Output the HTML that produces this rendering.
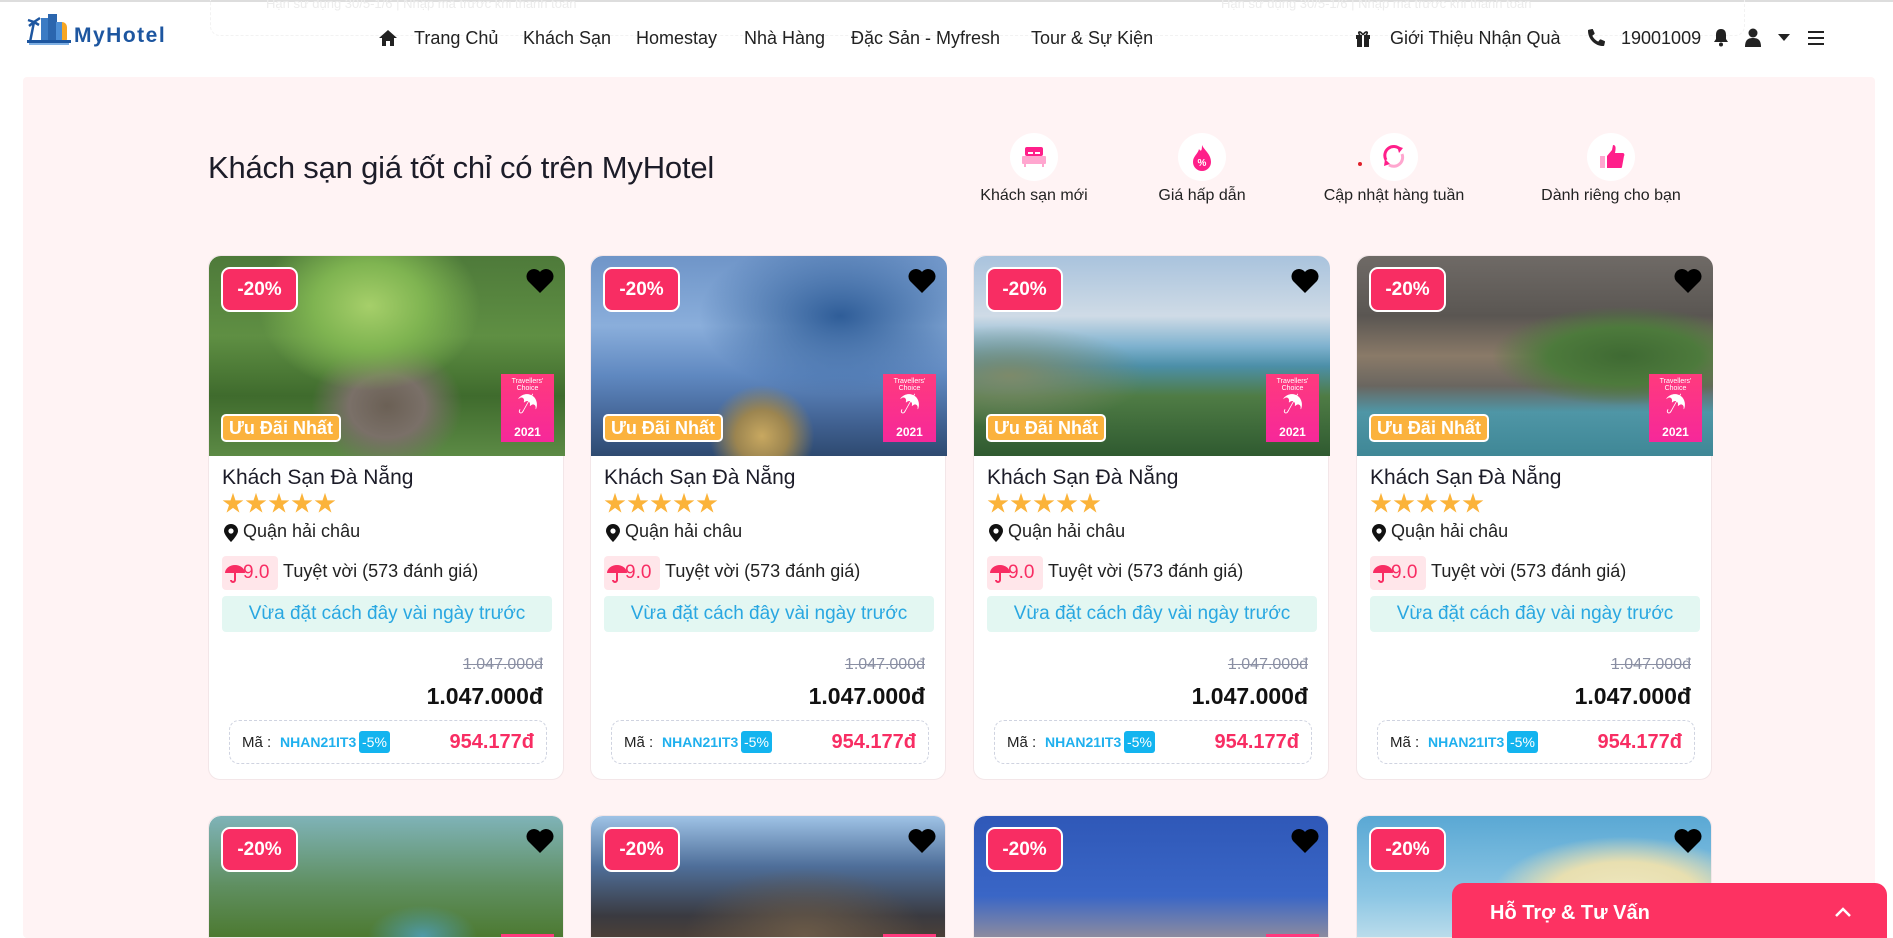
<!DOCTYPE html>
<html style="height:938px;overflow:hidden"><head><meta charset="utf-8">
<style>
*{box-sizing:border-box;margin:0;padding:0}
html,body{width:1893px;height:938px;overflow:hidden}
body{background:#fff;font-family:"Liberation Sans","Noto Sans CJK SC",sans-serif;color:#1c1c28;position:relative}
.topline{position:absolute;left:0;top:0;width:1893px;height:2px;background:#ddd}
.ghost{position:absolute;left:210px;top:0;width:1535px;height:36px;border:1px dashed #f2f2f2;border-top:none;border-radius:0 0 10px 10px;color:#ececec;font-size:13px;padding-left:55px;line-height:8px}
.ghost span{position:absolute;left:1010px}
.logo{position:absolute;left:27px;top:12px}
.logotxt{position:absolute;left:74px;top:24px;font-size:21px;font-weight:bold;color:#1d56a0;letter-spacing:1.5px}
.nav{position:absolute;top:28px;font-size:18px;color:#222;white-space:nowrap}
.pink{position:absolute;left:23px;top:77px;width:1852px;height:861px;background:#fff3f4;border-radius:4px}
h1{position:absolute;left:208px;top:150px;font-size:31px;font-weight:normal;color:#1c1c28;letter-spacing:-.2px}
.fi{position:absolute;top:133px;width:48px;height:48px;border-radius:50%;background:#fff}
.fl{position:absolute;top:187px;font-size:16px;color:#222;text-align:center;width:200px}
.card{position:absolute;width:356px;height:525px;background:#fff;border-radius:12px;border:1px solid #f3e6e8}
.r2{height:123px;overflow:hidden;border-radius:12px 12px 0 0}
.img{position:absolute;left:0;top:0;width:356px;height:200px;border-radius:12px 12px 0 0;overflow:hidden}
.disc{position:absolute;left:12px;top:11px;width:77px;height:45px;background:#f82d63;border:2px solid #fff;border-radius:9px;color:#fff;font-weight:bold;font-size:19px;text-align:center;line-height:41px}
.heart{position:absolute;left:316px;top:12px}
.tc{position:absolute;left:292px;top:118px;width:53px;height:68px;background:linear-gradient(#ff3a7d,#f6289a);color:#fff;text-align:center}
.tc .t{font-size:7px;margin-top:4px}
.tc .y{font-size:12px;font-weight:bold;position:absolute;bottom:3px;width:100%}
.uu{position:absolute;left:12px;top:158px;padding:0 6px;height:28px;background:#fbb23d;border:2px solid #fff;border-radius:5px;color:#fff;font-weight:bold;font-size:18px;line-height:24px}
.ttl{position:absolute;left:13px;top:210px;font-size:21px;color:#1c1c28}
.stars{position:absolute;left:13px;top:237px;color:#fbb33a;font-size:22px;letter-spacing:1px;line-height:22px}
.loc{position:absolute;left:34px;top:265px;font-size:18px;color:#222}
.rb{position:absolute;left:13px;top:300px;width:56px;height:34px;background:#ffe6ea;border-radius:4px;color:#f82d63;font-size:19px;line-height:34px;padding-left:21px}
.rt{position:absolute;left:74px;top:305px;font-size:18px;color:#222}
.green{position:absolute;left:13px;top:340px;width:330px;height:36px;background:#e3f7f2;border-radius:4px;color:#29a7e1;font-size:19px;text-align:center;line-height:36px}
.old{position:absolute;right:20px;top:400px;font-size:16px;color:#8a8fa3;text-decoration:line-through}
.price{position:absolute;right:20px;top:427px;font-size:23px;font-weight:bold;color:#111}
.cp{position:absolute;left:20px;top:464px;width:318px;height:44px;border:1px dashed #cfd3e0;border-radius:10px}
.cp .m{position:absolute;left:12px;top:13px;font-size:15px;color:#222}
.cp .c{position:absolute;left:50px;top:13px;font-size:14px;color:#1fb0ee;font-weight:bold}
.cp .p{position:absolute;left:129px;top:10px;background:#13b4ef;color:#fff;font-size:14px;padding:3px 3px;border-radius:3px}
.cp .r{position:absolute;right:12px;top:10px;font-size:20px;color:#f82d63;font-weight:bold}
.help{position:absolute;left:1452px;top:883px;width:435px;height:55px;background:#fd3262;border-radius:12px 12px 0 0;color:#fff;font-weight:bold;font-size:20px}
</style></head><body>
<div class="topline"></div>
<div class="ghost">Hạn sử dụng 30/5-1/6 | Nhập mã trước khi thanh toán<span>Hạn sử dụng 30/5-1/6 | Nhập mã trước khi thanh toán</span></div>
<svg class="logo" width="46" height="34" viewBox="0 0 46 34"><rect x="30" y="10" width="10" height="22" rx="5" fill="#f6a623"/><rect x="14" y="6" width="8" height="24" fill="#3b7bc4"/><rect x="21" y="2" width="9" height="28" fill="#2b66ae"/><rect x="29" y="10" width="6" height="20" fill="#4d8fd6"/><path d="M3 30 L7 10 M7 10 L1 8 M7 10 L13 6 M7 10 L2 14 M7 10 L12 13" stroke="#1d56a0" stroke-width="2.5" fill="none"/><rect x="0" y="28" width="44" height="3" fill="#1d56a0"/><rect x="2" y="31" width="40" height="2" fill="#7fb0e4"/></svg>
<div class="logotxt">MyHotel</div>
<svg style="position:absolute;left:378px;top:29px" width="20" height="18" viewBox="0 0 20 18"><path d="M10 1 L19 9 L16 9 L16 17 L12 17 L12 12 L8 12 L8 17 L4 17 L4 9 L1 9 Z" fill="#222"/></svg>
<div class="nav" style="left:414px">Trang Chủ</div>
<div class="nav" style="left:523px">Khách Sạn</div>
<div class="nav" style="left:636px">Homestay</div>
<div class="nav" style="left:744px">Nhà Hàng</div>
<div class="nav" style="left:851px">Đặc Sản - Myfresh</div>
<div class="nav" style="left:1031px">Tour &amp; Sự Kiện</div>
<svg style="position:absolute;left:1355px;top:30px" width="16" height="17" viewBox="0 0 16 17"><rect x="1" y="5" width="14" height="4" fill="#222"/><rect x="2" y="9" width="12" height="8" fill="#222"/><rect x="7" y="5" width="2" height="12" fill="#fff"/><path d="M8 5 C5 0 2 2 5 5 M8 5 C11 0 14 2 11 5" stroke="#222" stroke-width="1.6" fill="none"/></svg>
<div class="nav" style="left:1390px">Giới Thiệu Nhận Quà</div>
<svg style="position:absolute;left:1588px;top:29px" width="17" height="17" viewBox="0 0 512 512"><path fill="#222" d="M497 361l-112-48a24 24 0 0 0-28 7l-50 61A371 371 0 0 1 130 204l61-50a24 24 0 0 0 7-28L150 14a24 24 0 0 0-27-14L19 24A24 24 0 0 0 0 48c0 257 208 464 464 464a24 24 0 0 0 24-19l24-104a24 24 0 0 0-15-28z"/></svg>
<div class="nav" style="left:1621px">19001009</div>
<svg style="position:absolute;left:1713px;top:28px" width="16" height="19" viewBox="0 0 16 19"><path d="M8 1 C4 1 3 4 3 7 L3 11 L1 14 L15 14 L13 11 L13 7 C13 4 12 1 8 1 Z" fill="#222"/><circle cx="8" cy="16.5" r="2" fill="#222"/></svg>
<svg style="position:absolute;left:1744px;top:28px" width="18" height="19" viewBox="0 0 18 19"><circle cx="9" cy="5" r="4.5" fill="#222"/><path d="M1 19 C1 12 4 10 9 10 C14 10 17 12 17 19 Z" fill="#222"/></svg>
<svg style="position:absolute;left:1778px;top:34px" width="12" height="8"><path d="M0 0 L12 0 L6 7 Z" fill="#222"/></svg>
<svg style="position:absolute;left:1808px;top:30px" width="16" height="15"><rect y="1" width="16" height="2" fill="#222"/><rect y="7" width="16" height="2" fill="#222"/><rect y="13" width="16" height="2" fill="#222"/></svg>

<div class="pink"></div>
<h1>Khách sạn giá tốt chỉ có trên MyHotel</h1>
<div class="fi" style="left:1010px"><svg style="margin:13px 0 0 11px" width="26" height="22" viewBox="0 0 26 22"><rect x="4" y="1" width="18" height="9" rx="2" fill="#ff1f8a"/><rect x="7" y="6" width="5" height="2" fill="#fff"/><rect x="14" y="6" width="5" height="2" fill="#fff"/><rect x="1" y="10" width="24" height="8" rx="1" fill="#ffa6cf"/><rect x="3" y="18" width="2" height="3" fill="#ffa6cf"/><rect x="21" y="18" width="2" height="3" fill="#ffa6cf"/></svg></div>
<div class="fi" style="left:1178px"><svg style="margin:11px 0 0 13px" width="22" height="28" viewBox="0 0 22 28"><path d="M11 1 C13 6 20 10 20 18 A9 9 0 0 1 2 18 C2 12 7 10 8 5 C10 8 11 7 11 1 Z" fill="#ff1f8a"/><text x="11" y="22" font-size="10" fill="#fff" text-anchor="middle" font-family="Liberation Sans" font-weight="bold">%</text></svg></div>
<div style="position:absolute;left:1358px;top:162px;width:4px;height:4px;border-radius:50%;background:#e0202a"></div>
<div class="fi" style="left:1370px"><svg style="margin:11px 0 0 11px" width="26" height="26" viewBox="0 0 26 26"><path d="M5 16 A9 9 0 0 1 19 5" stroke="#ff1f8a" stroke-width="3" fill="none"/><path d="M16 2 L22 4 L18 9 Z" fill="#ff1f8a"/><path d="M21 10 A9 9 0 0 1 8 21" stroke="#ffa6cf" stroke-width="3" fill="none"/><path d="M4 15 L3 22 L9 20 Z" fill="#ff1f8a"/></svg></div>
<div class="fi" style="left:1587px"><svg style="margin:12px 0 0 12px" width="26" height="24" viewBox="0 0 26 24"><rect x="1" y="11" width="5" height="12" fill="#ffa6cf"/><path d="M8 11 L13 5 L14 0 C17 0 17 3 16 8 L24 8 C25 8 26 10 25 11 L23 22 C23 23 22 23 21 23 L8 23 Z" fill="#ff1f8a"/></svg></div>
<div class="fl" style="left:934px">Khách sạn mới</div>
<div class="fl" style="left:1102px">Giá hấp dẫn</div>
<div class="fl" style="left:1294px">Cập nhật hàng tuần</div>
<div class="fl" style="left:1511px">Dành riêng cho bạn</div>

<!-- row 1 -->
<div class="card" style="left:208px;top:255px">
<div class="img" style="background:radial-gradient(ellipse at 45% 25%,#a6cf6a 0,#7fb451 20%,transparent 40%),radial-gradient(ellipse at 50% 75%,#6b6055 0,#7a7068 15%,transparent 30%),linear-gradient(180deg,#4e7a3a 0%,#5f8f43 40%,#3f6b2d 70%,#5c8a45 100%)"></div>
<div class="disc">-20%</div>
<svg class="heart" width="30" height="26" viewBox="0 0 30 26"><path d="M15 25 L3 13 A7 7 0 0 1 15 4 A7 7 0 0 1 27 13 Z" fill="#000"/></svg>
<div class="tc"><div class="t">Travellers' Choice</div><div style="font-size:22px;line-height:26px">☂</div><div class="y">2021</div></div>
<div class="uu">Ưu Đãi Nhất</div>
<div class="ttl">Khách Sạn Đà Nẵng</div><div class="stars">★★★★★</div>
<svg style="position:absolute;left:15px;top:268px" width="14" height="18" viewBox="0 0 14 18"><path d="M7 0 A7 7 0 0 1 14 7 C14 11 7 18 7 18 C7 18 0 11 0 7 A7 7 0 0 1 7 0 Z" fill="#111"/><circle cx="7" cy="7" r="2.6" fill="#fff"/></svg>
<div class="loc">Quận hải châu</div>
<div class="rb">9.0</div><svg style="position:absolute;left:15px;top:307px" width="22" height="20" viewBox="0 0 22 20"><path d="M1 10 A10 8 0 0 1 21 10 Z" fill="#f82d63"/><path d="M11 9 L11 17 A2 2 0 0 1 7 17" stroke="#f82d63" stroke-width="2" fill="none"/></svg>
<div class="rt">Tuyệt vời (573 đánh giá)</div>
<div class="green">Vừa đặt cách đây vài ngày trước</div>
<div class="old">1.047.000đ</div><div class="price">1.047.000đ</div>
<div class="cp"><span class="m">Mã :</span><span class="c">NHAN21IT3</span><span class="p">-5%</span><span class="r">954.177đ</span></div>
</div>

<div class="card" style="left:590px;top:255px">
<div class="img" style="background:radial-gradient(ellipse at 48% 90%,#c8a860 0,#9c8550 10%,transparent 20%),radial-gradient(ellipse at 70% 30%,#2f5d98 0,transparent 40%),linear-gradient(180deg,#6f95c8 0%,#8aaedb 35%,#5f88c0 60%,#3f5f8f 85%,#2e4a70 100%)"></div>
<div class="disc">-20%</div>
<svg class="heart" width="30" height="26" viewBox="0 0 30 26"><path d="M15 25 L3 13 A7 7 0 0 1 15 4 A7 7 0 0 1 27 13 Z" fill="#000"/></svg>
<div class="tc"><div class="t">Travellers' Choice</div><div style="font-size:22px;line-height:26px">☂</div><div class="y">2021</div></div>
<div class="uu">Ưu Đãi Nhất</div>
<div class="ttl">Khách Sạn Đà Nẵng</div><div class="stars">★★★★★</div>
<svg style="position:absolute;left:15px;top:268px" width="14" height="18" viewBox="0 0 14 18"><path d="M7 0 A7 7 0 0 1 14 7 C14 11 7 18 7 18 C7 18 0 11 0 7 A7 7 0 0 1 7 0 Z" fill="#111"/><circle cx="7" cy="7" r="2.6" fill="#fff"/></svg>
<div class="loc">Quận hải châu</div>
<div class="rb">9.0</div><svg style="position:absolute;left:15px;top:307px" width="22" height="20" viewBox="0 0 22 20"><path d="M1 10 A10 8 0 0 1 21 10 Z" fill="#f82d63"/><path d="M11 9 L11 17 A2 2 0 0 1 7 17" stroke="#f82d63" stroke-width="2" fill="none"/></svg>
<div class="rt">Tuyệt vời (573 đánh giá)</div>
<div class="green">Vừa đặt cách đây vài ngày trước</div>
<div class="old">1.047.000đ</div><div class="price">1.047.000đ</div>
<div class="cp"><span class="m">Mã :</span><span class="c">NHAN21IT3</span><span class="p">-5%</span><span class="r">954.177đ</span></div>
</div>

<div class="card" style="left:973px;top:255px">
<div class="img" style="background:radial-gradient(ellipse at 10% 60%,#7d8a6a 0,transparent 30%),linear-gradient(180deg,#a9c3dd 0%,#cfdbe6 30%,#7fb2cf 45%,#4c8fa8 55%,#4f7c45 70%,#2f5a30 100%)"></div>
<div class="disc">-20%</div>
<svg class="heart" width="30" height="26" viewBox="0 0 30 26"><path d="M15 25 L3 13 A7 7 0 0 1 15 4 A7 7 0 0 1 27 13 Z" fill="#000"/></svg>
<div class="tc"><div class="t">Travellers' Choice</div><div style="font-size:22px;line-height:26px">☂</div><div class="y">2021</div></div>
<div class="uu">Ưu Đãi Nhất</div>
<div class="ttl">Khách Sạn Đà Nẵng</div><div class="stars">★★★★★</div>
<svg style="position:absolute;left:15px;top:268px" width="14" height="18" viewBox="0 0 14 18"><path d="M7 0 A7 7 0 0 1 14 7 C14 11 7 18 7 18 C7 18 0 11 0 7 A7 7 0 0 1 7 0 Z" fill="#111"/><circle cx="7" cy="7" r="2.6" fill="#fff"/></svg>
<div class="loc">Quận hải châu</div>
<div class="rb">9.0</div><svg style="position:absolute;left:15px;top:307px" width="22" height="20" viewBox="0 0 22 20"><path d="M1 10 A10 8 0 0 1 21 10 Z" fill="#f82d63"/><path d="M11 9 L11 17 A2 2 0 0 1 7 17" stroke="#f82d63" stroke-width="2" fill="none"/></svg>
<div class="rt">Tuyệt vời (573 đánh giá)</div>
<div class="green">Vừa đặt cách đây vài ngày trước</div>
<div class="old">1.047.000đ</div><div class="price">1.047.000đ</div>
<div class="cp"><span class="m">Mã :</span><span class="c">NHAN21IT3</span><span class="p">-5%</span><span class="r">954.177đ</span></div>
</div>

<div class="card" style="left:1356px;top:255px">
<div class="img" style="background:radial-gradient(ellipse at 75% 50%,#3f6a33 0,#4d7a3c 20%,transparent 35%),linear-gradient(180deg,#6f6a66 0%,#5a5652 30%,#8a7a68 50%,#6a6660 65%,#4f96a6 78%,#3f8796 100%)"></div>
<div class="disc">-20%</div>
<svg class="heart" width="30" height="26" viewBox="0 0 30 26"><path d="M15 25 L3 13 A7 7 0 0 1 15 4 A7 7 0 0 1 27 13 Z" fill="#000"/></svg>
<div class="tc"><div class="t">Travellers' Choice</div><div style="font-size:22px;line-height:26px">☂</div><div class="y">2021</div></div>
<div class="uu">Ưu Đãi Nhất</div>
<div class="ttl">Khách Sạn Đà Nẵng</div><div class="stars">★★★★★</div>
<svg style="position:absolute;left:15px;top:268px" width="14" height="18" viewBox="0 0 14 18"><path d="M7 0 A7 7 0 0 1 14 7 C14 11 7 18 7 18 C7 18 0 11 0 7 A7 7 0 0 1 7 0 Z" fill="#111"/><circle cx="7" cy="7" r="2.6" fill="#fff"/></svg>
<div class="loc">Quận hải châu</div>
<div class="rb">9.0</div><svg style="position:absolute;left:15px;top:307px" width="22" height="20" viewBox="0 0 22 20"><path d="M1 10 A10 8 0 0 1 21 10 Z" fill="#f82d63"/><path d="M11 9 L11 17 A2 2 0 0 1 7 17" stroke="#f82d63" stroke-width="2" fill="none"/></svg>
<div class="rt">Tuyệt vời (573 đánh giá)</div>
<div class="green">Vừa đặt cách đây vài ngày trước</div>
<div class="old">1.047.000đ</div><div class="price">1.047.000đ</div>
<div class="cp"><span class="m">Mã :</span><span class="c">NHAN21IT3</span><span class="p">-5%</span><span class="r">954.177đ</span></div>
</div>

<!-- row 2 -->
<div class="card r2" style="left:208px;top:815px"><div class="img" style="background:radial-gradient(ellipse at 60% 60%,#4f9aa8 0,transparent 18%),linear-gradient(180deg,#7fb3b8 0%,#5f8f60 35%,#4d7a32 60%,#8a6a4a 100%)"></div><div class="disc">-20%</div><svg class="heart" width="30" height="26" viewBox="0 0 30 26"><path d="M15 25 L3 13 A7 7 0 0 1 15 4 A7 7 0 0 1 27 13 Z" fill="#000"/></svg><div class="tc"></div></div>
<div class="card r2" style="left:590px;top:815px"><div class="img" style="background:radial-gradient(ellipse at 60% 60%,#6a5a48 0,transparent 40%),linear-gradient(180deg,#9fc3e6 0%,#4f6f9a 25%,#3a3a40 50%,#6a4a2a 80%,#a0602a 100%)"></div><div class="disc">-20%</div><svg class="heart" width="30" height="26" viewBox="0 0 30 26"><path d="M15 25 L3 13 A7 7 0 0 1 15 4 A7 7 0 0 1 27 13 Z" fill="#000"/></svg><div class="tc"></div></div>
<div class="card r2" style="left:973px;top:815px"><div class="img" style="background:linear-gradient(180deg,#2f58b8 0%,#3a66c6 40%,#8a8aa0 60%,#d8d4b0 80%,#c0b890 100%)"></div><div class="disc">-20%</div><svg class="heart" width="30" height="26" viewBox="0 0 30 26"><path d="M15 25 L3 13 A7 7 0 0 1 15 4 A7 7 0 0 1 27 13 Z" fill="#000"/></svg><div class="tc"></div></div>
<div class="card r2" style="left:1356px;top:815px"><div class="img" style="background:radial-gradient(ellipse at 75% 40%,#efe8c0 0,#e8dfb0 20%,transparent 35%),linear-gradient(180deg,#5aa8d4 0%,#8cc6e4 40%,#cfe6ee 70%,#8a9a80 100%)"></div><div class="disc">-20%</div><svg class="heart" width="30" height="26" viewBox="0 0 30 26"><path d="M15 25 L3 13 A7 7 0 0 1 15 4 A7 7 0 0 1 27 13 Z" fill="#000"/></svg><div class="tc"></div></div>

<div class="help"><span style="position:absolute;left:38px;top:19px">Hỗ Trợ &amp; Tư Vấn</span><svg style="position:absolute;left:383px;top:24px" width="16" height="10"><path d="M1 9 L8 2 L15 9" stroke="#fff" stroke-width="2.5" fill="none"/></svg></div>
</body></html>
